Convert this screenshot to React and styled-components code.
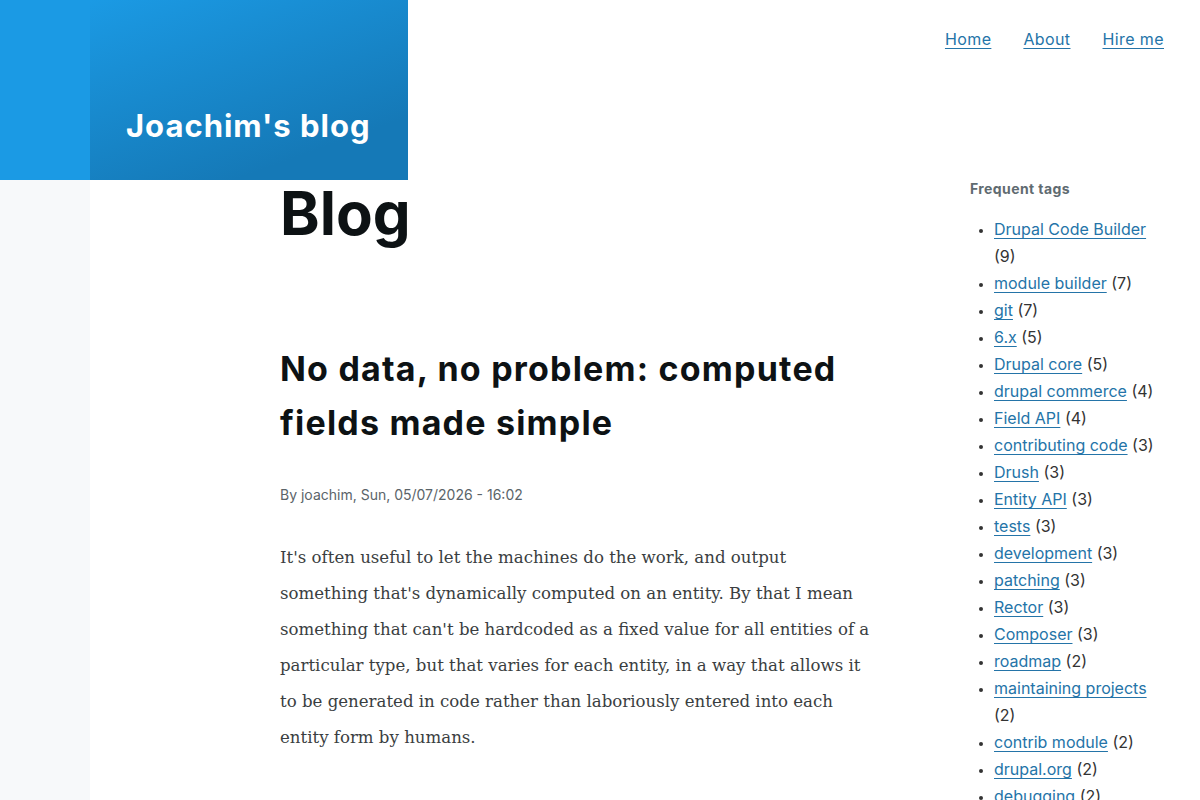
import React from 'react'
import styled, {createGlobalStyle} from 'styled-components'

const GlobalStyle = createGlobalStyle`
    html, body {
        margin: 0;
        padding: 0;
        background: #fff;
    }
    body {
        font-family: Inter, "Open Sans", sans-serif;
        color: #313637;
    }
    * {
        box-sizing: border-box;
    }
`
const Page = styled.div`
    display: grid;
    grid-template-columns: 90px 1fr;
    grid-template-rows: 180px auto;
    min-height: 800px;
`
const HeaderStrip = styled.div`
    background-color: #1b9ae4;
`
const SocialBar = styled.div`
    background-color: #f7f9fa;
`
const Header = styled.header`
    display: flex;
    justify-content: space-between;
    align-items: flex-start;
`
const Branding = styled.div`
    width: 318px;
    height: 180px;
    display: flex;
    align-items: flex-end;
    padding: 0 0 36px 36px;
    background-image: linear-gradient(160deg, #1b9ae4 0%, #1579b7 78.66%);
`
const SiteName = styled.a`
    color: #fff;
    font-size: 31px;
    font-weight: 700;
    line-height: 36px;
    letter-spacing: 1px;
    text-decoration: none;
`
const Nav = styled.ul`
    display: flex;
    gap: 32px;
    margin: 0;
    padding: 27px 36px 0 0;
    list-style: none;
`
const NavLink = styled.a`
    font-size: 16px;
    line-height: 24px;
    letter-spacing: 0.4px;
    color: #2474a8;
    text-decoration: underline;
    text-underline-offset: 3px;
    text-decoration-thickness: 1px;
`
const Main = styled.main`
    display: grid;
    grid-template-columns: 594px 196px;
    column-gap: 96px;
    padding: 0 34px 0 190px;
`
const Content = styled.div``
const PageTitle = styled.h1`
    margin: 0;
    font-size: 60px;
    line-height: 67px;
    font-weight: 700;
    letter-spacing: 0;
    color: #0d1214;
`
const Article = styled.article`
    padding-top: 95px;
`
const NodeTitle = styled.h2`
    margin: 0;
    font-size: 34px;
    line-height: 54px;
    font-weight: 700;
    letter-spacing: 1.2px;
    color: #0d1214;
`
const Meta = styled.div`
    margin-top: 34px;
    font-size: 14px;
    line-height: 21px;
    color: #5b6469;
`
const Body = styled.p`
    margin: 35px 0 0;
    font-family: "DejaVu Serif", serif;
    font-size: 16.6px;
    line-height: 36px;
    color: #3a3e41;
`
const Sidebar = styled.aside``
const BlockTitle = styled.h2`
    margin: 0;
    font-size: 14px;
    line-height: 18px;
    font-weight: 700;
    letter-spacing: 0.4px;
    color: #5f6b71;
`
const TagList = styled.ul`
    margin: 18px 0 0;
    padding-left: 24px;
    font-size: 16px;
    line-height: 27px;
    color: #333;
`
const Tag = styled.li`
    &::marker {
        font-size: 12px;
    }
`
const TagLink = styled.a`
    color: #2474a8;
    text-decoration: underline;
    text-underline-offset: 3px;
    text-decoration-thickness: 1px;
`

const navItems = ['Home', 'About', 'Hire me']

const tags = [
    ['Drupal Code Builder', 9],
    ['module builder', 7],
    ['git', 7],
    ['6.x', 5],
    ['Drupal core', 5],
    ['drupal commerce', 4],
    ['Field API', 4],
    ['contributing code', 3],
    ['Drush', 3],
    ['Entity API', 3],
    ['tests', 3],
    ['development', 3],
    ['patching', 3],
    ['Rector', 3],
    ['Composer', 3],
    ['roadmap', 2],
    ['maintaining projects', 2],
    ['contrib module', 2],
    ['drupal.org', 2],
    ['debugging', 2],
]

const App = () => {
    return (
        <Page>
            <GlobalStyle />
            <HeaderStrip />
            <Header>
                <Branding>
                    <SiteName href="#">Joachim's blog</SiteName>
                </Branding>
                <Nav>
                    {navItems.map(item => (
                        <li key={item}><NavLink href="#">{item}</NavLink></li>
                    ))}
                </Nav>
            </Header>
            <SocialBar />
            <Main>
                <Content>
                    <PageTitle>Blog</PageTitle>
                    <Article>
                        <NodeTitle>No data, no problem: computed fields made simple</NodeTitle>
                        <Meta>By joachim, Sun, 05/07/2026 - 16:02</Meta>
                        <Body>
                            It's often useful to let the machines do the work, and output something that's dynamically computed on an entity. By that I mean something that can't be hardcoded as a fixed value for all entities of a particular type, but that varies for each entity, in a way that allows it to be generated in code rather than laboriously entered into each entity form by humans.
                        </Body>
                    </Article>
                </Content>
                <Sidebar>
                    <BlockTitle>Frequent tags</BlockTitle>
                    <TagList>
                        {tags.map(([name, count]) => (
                            <Tag key={name}><TagLink href="#">{name}</TagLink> ({count})</Tag>
                        ))}
                    </TagList>
                </Sidebar>
            </Main>
        </Page>
    )
}

export default App
